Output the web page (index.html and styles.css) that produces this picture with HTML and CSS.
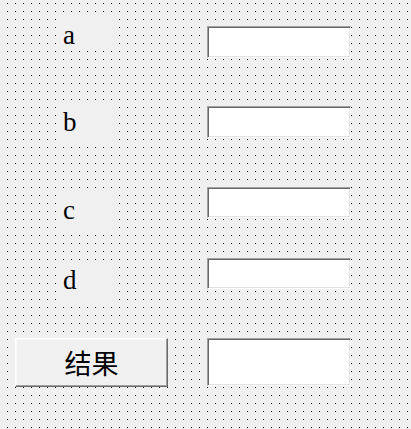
FILE: index.html
```html
<!DOCTYPE html>
<html lang="zh-CN">
<head>
<meta charset="utf-8">
<title>Form</title>
<link rel="stylesheet" href="styles.css">
</head>
<body>
<div class="form">
  <div class="col-left">
    <div class="label label-a">a</div>
    <div class="label label-b">b</div>
    <div class="label label-c">c</div>
    <div class="label label-d">d</div>
    <button class="btn" type="button">结果</button>
  </div>
  <div class="col-right">
    <div class="textbox tb-1"></div>
    <div class="textbox tb-2"></div>
    <div class="textbox tb-3"></div>
    <div class="textbox tb-4"></div>
    <div class="textbox tb-5"></div>
  </div>
</div>
</body>
</html>
```
FILE: styles.css
```css
html, body {
  margin: 0;
  padding: 0;
  background: #f0f0f0;
}

.form {
  width: 411px;
  height: 429px;
  overflow: hidden;
  display: flex;
  background-color: #f0f0f0;
  background-image: url("data:image/svg+xml,%3Csvg xmlns='http://www.w3.org/2000/svg' width='8' height='8' shape-rendering='crispEdges'%3E%3Crect x='0' y='0' width='1' height='1' fill='%23000'/%3E%3C/svg%3E");
  background-size: 8px 8px;
  background-position: 7px 3px;
}

.col-left {
  display: flex;
  flex-direction: column;
  align-items: flex-start;
  margin-left: 15px;
  width: 153px;
}

.col-right {
  display: flex;
  flex-direction: column;
  margin-left: 39px;
  width: 144px;
}

.label {
  box-sizing: border-box;
  width: 57px;
  margin-left: 42px;
  padding: 6px 0 0 6px;
  background: #f0f0f0;
  font-family: "Liberation Serif", "DejaVu Serif", serif;
  font-size: 27px;
  line-height: 30px;
  color: #000;
}

.label-a { margin-top: 14px; height: 36px; }
.label-b { margin-top: 51px; height: 41px; }
.label-c { margin-top: 48px; height: 40px; padding-top: 5px; }
.label-d { margin-top: 32px; height: 40px; padding-top: 3px; }

.btn {
  box-sizing: border-box;
  margin-top: 36px;
  width: 153px;
  height: 49px;
  padding: 0;
  background: #f0f0f0;
  border: 1px solid;
  border-color: #ffffff #696969 #696969 #ffffff;
  box-shadow: inset -1px -1px 0 #a0a0a0, inset 1px 1px 0 #f8f8f8;
  font-family: "Noto Sans CJK SC", "Noto Sans", sans-serif;
  font-size: 27px;
  line-height: 1;
  color: #000;
}

.textbox {
  box-sizing: border-box;
  width: 144px;
  background: #fff;
  border: 1px solid;
  border-color: #a0a0a0 #ffffff #ffffff #a0a0a0;
  box-shadow: inset 1px 1px 0 #696969, inset -1px -1px 0 #e3e3e3;
}

.tb-1 { margin-top: 26px; height: 32px; }
.tb-2 { margin-top: 48px; height: 32px; }
.tb-3 { margin-top: 49px; height: 31px; }
.tb-4 { margin-top: 40px; height: 31px; }
.tb-5 { margin-top: 49px; height: 48px; }
```
